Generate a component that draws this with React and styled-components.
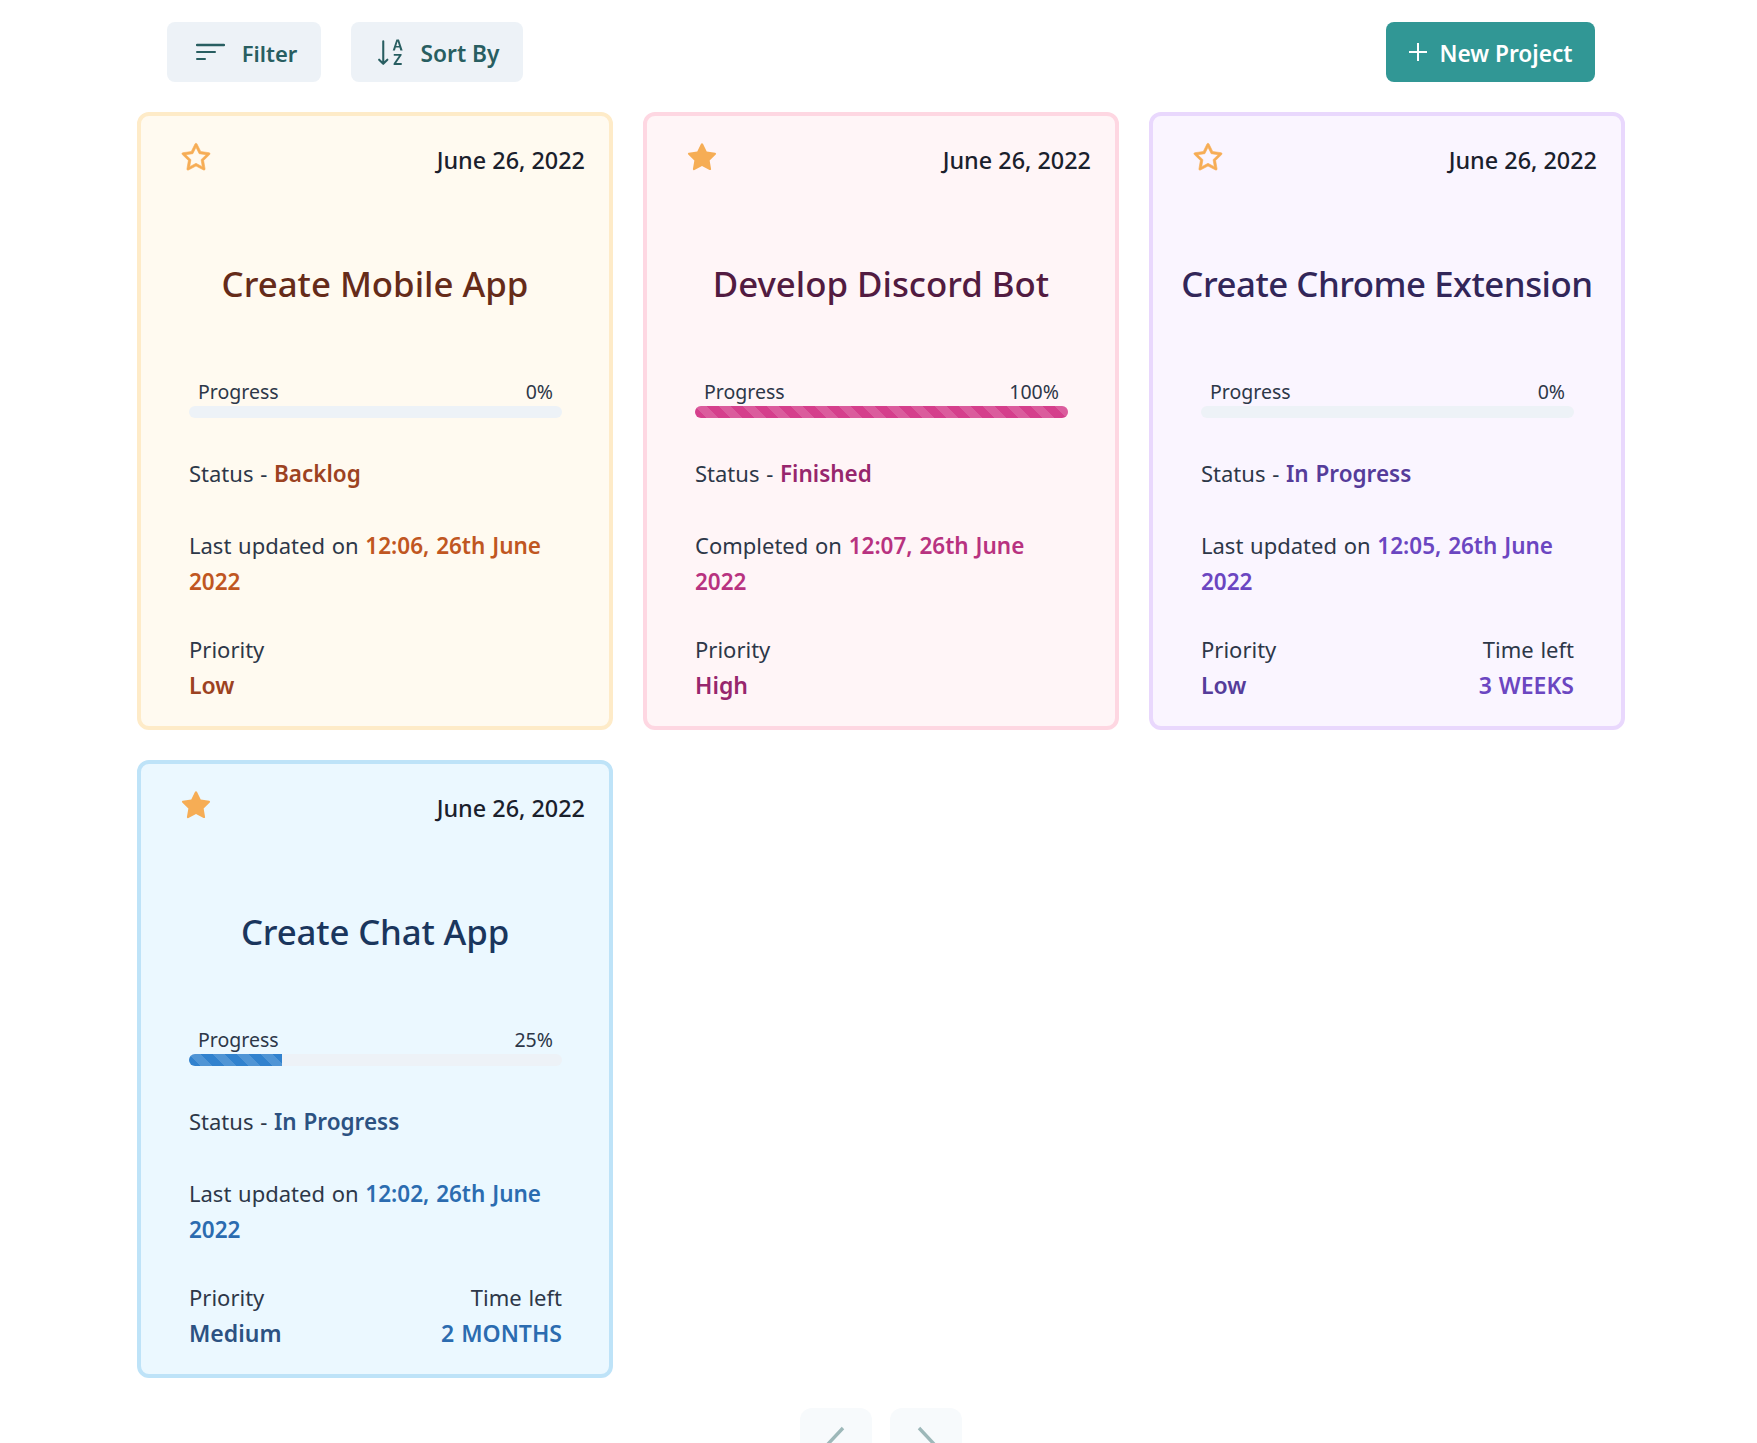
import React from "react";
import styled, { createGlobalStyle } from "styled-components";
import { BsSortAlphaDown } from "react-icons/bs";
import { AiFillStar, AiOutlineStar } from "react-icons/ai";

const Global = createGlobalStyle`
  html, body { margin: 0; padding: 0; background: #fff; overflow: hidden; height: 1443px; }
  * { box-sizing: border-box; }
  body { font-family: "Noto Sans", "Open Sans", sans-serif; color: #2D3748; }
`;

const Page = styled.div`
  width: 1757px;
  padding: 22px 132px 0 137px;
`;
const Toolbar = styled.div`
  display: flex;
  align-items: center;
  gap: 30px;
  padding: 0 30px;
  margin-bottom: 30px;
`;
const ToolButton = styled.button`
  height: 60px;
  border: 0;
  border-radius: 8px;
  background: #EDF2F7;
  color: #285E61;
  font: 570 ${(p) => p.$fs || 22.7}px "Noto Sans", sans-serif;
  display: flex;
  align-items: center;
  justify-content: center;
  gap: ${(p) => p.$gap || 16}px;
  width: ${(p) => p.$w}px;
  padding: 2px ${(p) => p.$pr || 0}px 0 ${(p) => p.$pl || 0}px;
  svg { margin-top: -2px; }
`;
const NewButton = styled(ToolButton)`
  background: #319795;
  color: #fff;
  margin-left: auto;
`;
const Grid = styled.div`
  display: grid;
  grid-template-columns: repeat(3, 476px);
  grid-auto-rows: 618px;
  gap: 30px;
`;
const Card = styled.div`
  border: 4px solid ${(p) => p.$c.border};
  background: ${(p) => p.$c.bg};
  border-radius: 12px;
  display: flex;
  flex-direction: column;
`;
const CardHeader = styled.div`
  display: flex;
  justify-content: space-between;
  padding: 27px 24px 0 38px;
  height: 62px;
`;
const StarButton = styled.span`
  display: block;
  color: #F6AD55;
  font-size: 34px;
  line-height: 0;
  margin-top: -2px;
`;
const DateText = styled.span`
  font-size: 23.4px;
  line-height: 34px;
  font-weight: 500;
  color: #1A202C;
`;
const Title = styled.h2`
  margin: 82px 0 0;
  text-align: center;
  font-size: 34.8px;
  line-height: 48px;
  font-weight: 480;
  letter-spacing: ${(p) => p.$track || 0}px;
  color: ${(p) => p.$c.title};
  white-space: nowrap;
`;
const CardBody = styled.div`
  padding: 0 47px 0 48px;
`;
const ProgressLabels = styled.div`
  margin-top: 69px;
  height: 29px;
  padding: 0 9px;
  display: flex;
  justify-content: space-between;
  align-items: center;
  font-size: 19.5px;
  font-weight: 400;
  line-height: 29px;
`;
const Track = styled.div`
  height: 12px;
  border-radius: 6px;
  background: #EDF2F7;
  overflow: hidden;
`;
const Fill = styled.div`
  height: 100%;
  background-color: ${(p) => p.$color};
  background-image: linear-gradient(45deg, rgba(255,255,255,0.15) 25%, transparent 25%, transparent 50%, rgba(255,255,255,0.15) 50%, rgba(255,255,255,0.15) 75%, transparent 75%, transparent);
  background-size: 24px 24px;
`;
const Line = styled.p`
  margin: ${(p) => p.$mt}px 0 0;
  font-size: 22px;
  font-weight: 400;
  line-height: 36px;
  word-spacing: 1px;
`;
const Accent = styled.span`
  font-weight: 570;
  font-size: 22.5px;
  line-height: 28px;
  color: ${(p) => p.$color};
`;
const InfoRow = styled.div`
  margin-top: 32px;
  display: flex;
  justify-content: space-between;
  font-size: 22px;
  font-weight: 400;
  line-height: 36px;
  word-spacing: 1px;
`;
const InfoCol = styled.div`
  display: flex;
  flex-direction: column;
  align-items: ${(p) => (p.$end ? "flex-end" : "flex-start")};
`;
const InfoValue = styled(Accent)`
  font-size: 23px;
  line-height: 36px;
`;
const Pager = styled.div`
  display: flex;
  justify-content: center;
  gap: 18px;
  margin-top: 30px;
`;
const PageButton = styled.button`
  width: 72px;
  height: 72px;
  border: 0;
  padding: 0;
  border-radius: 12px;
  background: #F7FAFC;
  display: flex;
  align-items: center;
  justify-content: center;
`;

const palettes = {
  orange: { bg: "#FFFAF0", border: "#FEEBC8", title: "#652B19", status: "#9C4221", date: "#C05621", bar: "#DD6B20" },
  pink: { bg: "#FFF5F7", border: "#FED7E2", title: "#521B41", status: "#97266D", date: "#B83280", bar: "#D53F8C" },
  purple: { bg: "#FAF5FF", border: "#E9D8FD", title: "#322659", status: "#553C9A", date: "#6B46C1", bar: "#805AD5" },
  blue: { bg: "#EBF8FF", border: "#BEE3F8", title: "#1A365D", status: "#2C5282", date: "#2B6CB0", bar: "#3182CE" },
};

const projects = [
  { c: "orange", filled: false, title: "Create Mobile App", pct: 0, status: "Backlog", label: "Last updated on", time: "12:06, 26th June 2022", priority: "Low" },
  { c: "pink", filled: true, title: "Develop Discord Bot", pct: 100, status: "Finished", label: "Completed on", time: "12:07, 26th June 2022", priority: "High" },
  { c: "purple", filled: false, track: -0.48, title: "Create Chrome Extension", pct: 0, status: "In Progress", label: "Last updated on", time: "12:05, 26th June 2022", priority: "Low", left: "3 WEEKS" },
  { c: "blue", filled: true, track: -0.15, title: "Create Chat App", pct: 25, status: "In Progress", label: "Last updated on", time: "12:02, 26th June 2022", priority: "Medium", left: "2 MONTHS" },
];

const FilterIcon = () => (
  <svg width="29" height="18" viewBox="0 0 29 18" fill="none" stroke="currentColor" strokeLinecap="round" strokeWidth="2">
    <path d="M1 2h27" strokeWidth="2.4" />
    <path d="M1 9h18" />
    <path d="M1 16h8" />
  </svg>
);
const PlusIcon = () => (
  <svg width="20" height="20" viewBox="0 0 20 20" fill="none" stroke="currentColor" strokeWidth="2">
    <path d="M10 1v18M1 10h18" />
  </svg>
);
const Chevron = ({ flip }) => (
  <svg width="20" height="36" viewBox="0 0 20 36" fill="none" stroke="#9DB8B9" strokeWidth="3.4" style={flip ? { transform: "scaleX(-1)" } : undefined}>
    <path d="M17 2L2 18l15 16" />
  </svg>
);

function ProjectCard({ p }) {
  const c = palettes[p.c];
  return (
    <Card $c={c}>
      <CardHeader>
        <StarButton>
          {p.filled ? <AiFillStar /> : <AiOutlineStar stroke="currentColor" strokeWidth={18} />}
        </StarButton>
        <DateText>June 26, 2022</DateText>
      </CardHeader>
      <Title $c={c} $track={p.track}>{p.title}</Title>
      <CardBody>
        <ProgressLabels><span>Progress</span><span>{p.pct}%</span></ProgressLabels>
        <Track><Fill $color={c.bar} style={{ width: `${p.pct}%` }} /></Track>
        <Line $mt={37}>Status - <Accent $color={c.status}>{p.status}</Accent></Line>
        <Line $mt={36}>{p.label} <Accent $color={c.date}>{p.time}</Accent></Line>
        <InfoRow>
          <InfoCol><span>Priority</span><InfoValue $color={c.status}>{p.priority}</InfoValue></InfoCol>
          {p.left && <InfoCol $end><span>Time left</span><InfoValue $color={c.date}>{p.left}</InfoValue></InfoCol>}
        </InfoRow>
      </CardBody>
    </Card>
  );
}

export default function App() {
  return (
    <Page>
      <Global />
      <Toolbar>
        <ToolButton $w={154} $fs={22} $gap={17} $pl={5}><FilterIcon />Filter</ToolButton>
        <ToolButton $w={172} $gap={13}><BsSortAlphaDown size={33} />Sort By</ToolButton>
        <NewButton $w={209} $gap={11}><PlusIcon />New Project</NewButton>
      </Toolbar>
      <Grid>
        {projects.map((p) => <ProjectCard key={p.title} p={p} />)}
      </Grid>
      <Pager>
        <PageButton aria-label="Previous"><Chevron /></PageButton>
        <PageButton aria-label="Next"><Chevron flip /></PageButton>
      </Pager>
    </Page>
  );
}
